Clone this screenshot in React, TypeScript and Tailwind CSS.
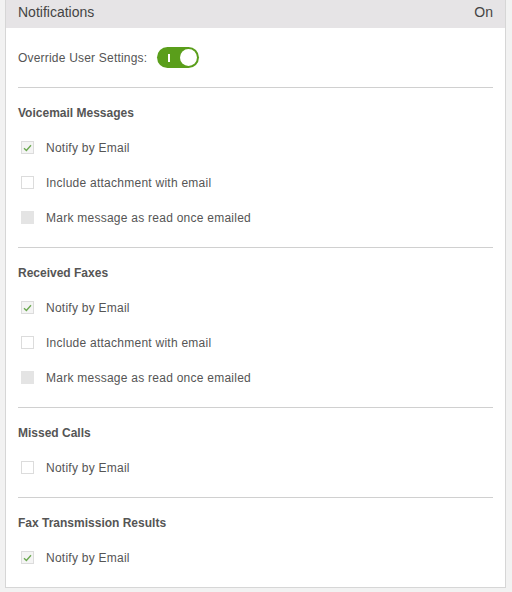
const sections = [
  {
    title: 'Voicemail Messages',
    items: [
      { label: 'Notify by Email', state: 'checked' },
      { label: 'Include attachment with email', state: 'empty' },
      { label: 'Mark message as read once emailed', state: 'disabled' },
    ],
  },
  {
    title: 'Received Faxes',
    items: [
      { label: 'Notify by Email', state: 'checked' },
      { label: 'Include attachment with email', state: 'empty' },
      { label: 'Mark message as read once emailed', state: 'disabled' },
    ],
  },
  {
    title: 'Missed Calls',
    items: [{ label: 'Notify by Email', state: 'empty' }],
  },
  {
    title: 'Fax Transmission Results',
    items: [{ label: 'Notify by Email', state: 'checked' }],
  },
];

const Checkbox = ({ state }: { state: string }) => {
  const box =
    state === 'disabled'
      ? 'bg-[#e4e4e4] border-[#e4e4e4]'
      : state === 'checked'
      ? 'bg-[#f4f4f4] border-[#dcdcdc]'
      : 'bg-white border-[#dcdcdc]';
  return (
    <span className={`w-[13px] h-[13px] border flex items-center justify-center ${box}`}>
      {state === 'checked' && (
        <svg width="9" height="8" viewBox="0 0 9 8">
          <path d="M1 4.2 L3.4 6.5 L8 1.2" fill="none" stroke="#6aa84f" strokeWidth="1.3" />
        </svg>
      )}
    </span>
  );
};

export default function App() {
  return (
    <div className="w-[512px] h-[592px] bg-[#f2f2f2] font-['Liberation_Sans',Arial,sans-serif]">
      <div className="ml-[5px] w-[501px] bg-white border-x border-b border-[#d6d6d6]">
        <div className="h-[28px] pb-[3px] bg-[#e6e4e6] flex items-center justify-between pl-[12px] pr-[12px] text-[14px] text-[#444]">
          <span>Notifications</span>
          <span>On</span>
        </div>
        <div className="px-[12px]">
          <div className="pt-[19px] pb-[19px] flex items-center gap-[10px] text-[12px] text-[#555] tracking-[0.2px]">
            <span>Override User Settings:</span>
            <span className="w-[42px] h-[21px] rounded-full bg-[#5a9e1b] flex items-center justify-between pl-[11px] pr-[2px]">
              <span className="w-[2px] h-[8px] bg-white" />
              <span className="w-[17px] h-[17px] rounded-full bg-white" />
            </span>
          </div>
          {sections.map((s) => (
            <div key={s.title} className="border-t border-[#d0d0d0] pb-[12px]">
              <div className="pt-[18px] h-[31px] leading-[14px] text-[12px] font-bold text-[#555]">{s.title}</div>
              <div className="mt-[11px] flex flex-col">
                {s.items.map((it) => (
                  <div key={it.label} className="h-[35px] flex items-center pl-[3px] gap-[12px] text-[12px] text-[#555] tracking-[0.25px]">
                    <Checkbox state={it.state} />
                    <span>{it.label}</span>
                  </div>
                ))}
              </div>
            </div>
          ))}
        </div>
      </div>
    </div>
  );
}
